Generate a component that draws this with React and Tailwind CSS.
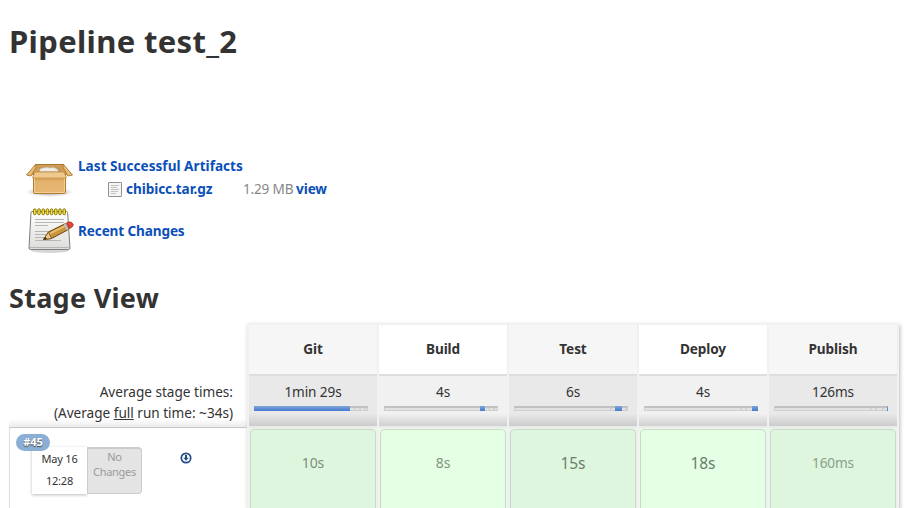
const stages = [
  { name: "Git", avg: "1min 29s", start: 0, width: 96, ticks: [99, 104, 109], time: "10s", tone: "text-[14px] text-[#7b8f7b]" },
  { name: "Build", avg: "4s", start: 96, width: 5, ticks: [103, 108], time: "8s", tone: "text-[14px] text-[#82937f]" },
  { name: "Test", avg: "6s", start: 101, width: 7, ticks: [95, 110], time: "15s", tone: "text-[15.5px] text-[#6d806d]" },
  { name: "Deploy", avg: "4s", start: 108, width: 6, ticks: [95, 100], time: "18s", tone: "text-[15.5px] text-[#6b7e6b]" },
  { name: "Publish", avg: "126ms", start: 113, width: 1, ticks: [95, 100, 107], time: "160ms", tone: "text-[13.6px] text-[#8a9f8a]" },
];

function BoxIcon() {
  return (
    <svg width="49" height="48" viewBox="0 0 49 48" className="shrink-0">
      <defs>
        <linearGradient id="boxFront" x1="0" y1="0" x2="0" y2="1">
          <stop offset="0" stopColor="#e2af68" />
          <stop offset="1" stopColor="#e6b873" />
        </linearGradient>
        <radialGradient id="boxShadow">
          <stop offset="0" stopColor="#000" stopOpacity=".4" />
          <stop offset="1" stopColor="#000" stopOpacity="0" />
        </radialGradient>
      </defs>
      <ellipse cx="24.500" cy="37" rx="24" ry="5" fill="url(#boxShadow)" />
      <path d="M10.500 9.500h28l3 10h-34z" fill="#cf9d58" stroke="#a9752d" />
      <path d="M14 12h22v6H13z" fill="#c3965a" />
      <path d="M15 16.500c-1-2.500 1-3.500 4-3.500 3-1 5.500 0 6 0 4-1 8 .5 8 3.500z" fill="#eeede9" stroke="#cfc6b6" strokeWidth=".6" />
      <path d="M8.500 19.500h32v18q0 1-1 1h-30q-1 0-1-1z" fill="url(#boxFront)" stroke="#b07a30" />
      <path d="M9.500 21h30v16.500h-30z" fill="none" stroke="#f2cf95" />
      <path d="M10 24.500h29" stroke="#c99550" strokeWidth="1.500" opacity=".5" />
      <path d="M10.500 9.500L1.500 20l4.500 1 5-8.500zM38.500 9.500l9 10.500-4.500 1-5-8.500z" fill="#e8bd7c" stroke="#b57f36" strokeLinejoin="round" />
      <path d="M10 17h29l2.500 6h-34z" fill="#eec88c" stroke="#c48c43" strokeWidth=".8" />
    </svg>
  );
}

function NotepadIcon() {
  return (
    <svg width="49" height="48" viewBox="0 0 49 48" className="shrink-0">
      <defs>
        <linearGradient id="paper" x1="0" y1="0" x2="0" y2="1">
          <stop offset="0" stopColor="#fff" />
          <stop offset="1" stopColor="#dcdcda" />
        </linearGradient>
      </defs>
      <ellipse cx="25" cy="44.500" rx="19" ry="2.500" fill="#000" opacity=".16" />
      <path d="M7 5.500h34.500q1 0 1.100 1l2.400 35.500q0 1.500-1.500 1.500h-38q-1.500 0-1.500-1.500L6 6.500q0-1 1-1z" fill="url(#paper)" stroke="#7d7d79" />
      <path d="M4.500 41.500h40" stroke="#b5b5b1" />
      <path d="M10 13.500h29M10 16.500h29M10 19.500h13M10 25.500h23M10 28.500h16M10 31.500h10M10 34.500h26" stroke="#b6b6b3" />
      <g fill="#f2dc32" stroke="#857206" strokeWidth=".9">
        {[9.500, 13.700, 17.900, 22.100, 26.300, 30.500, 34.700, 38.900].map((x) => (
          <rect key={x} x={x - 1} y="2.800" width="2.600" height="6" rx="1.300" />
        ))}
      </g>
      <path d="M18.500 33.500l5-7.500 17-8.500 3 6-17 9z" fill="#c9943c" stroke="#6b4310" strokeLinejoin="round" />
      <path d="M25 27.500l16-8" stroke="#e8c074" strokeWidth="1.600" />
      <path d="M18.500 33.500l5-7.500 3 6.500z" fill="#e9ca8c" stroke="#6b4310" strokeWidth=".7" />
      <path d="M18.500 33.500l2-2.700 1.200 2.200z" fill="#302819" />
      <path d="M39.700 17.800l3 6" stroke="#bdbdbd" strokeWidth="2.500" />
      <path d="M41.500 17l2-1q3.500-.6 4.500 2.200 .4 1.800-.8 2.600l-3 1.900z" fill="#e8453c" stroke="#9d2620" strokeWidth=".8" />
    </svg>
  );
}

function FileIcon() {
  return (
    <svg width="14" height="16" viewBox="0 0 14 16" className="shrink-0">
      <rect x=".5" y="1.500" width="13" height="14" rx=".5" fill="#f5f5f5" stroke="#929292" />
      <path d="M3 4.500h8M3 6.500h6M3 8.500h8M3 10.500h7M3 12.500h5" stroke="#c4c4c4" />
    </svg>
  );
}

function Stage({ stage, odd }) {
  return (
    <div className="flex w-[130px] shrink-0 flex-col border-l-2 border-[#f1f1f1]">
      <div className={`flex h-[49px] items-center justify-center text-[13.6px] font-bold tracking-[-0.1px] ${odd ? "bg-[#f6f6f6]" : "bg-white"}`}>{stage.name}</div>
      <div className={`h-[52px] border-t-2 border-[#dedede] bg-linear-to-b from-75% ${odd ? "from-[#e9e9e9] to-[#cbcbcb]" : "from-[#f1f1f1] to-[#d0d0d0]"}`}>
        <div className="mt-[6px] text-center text-[13.6px] leading-5 tracking-[-0.1px]">{stage.avg}</div>
        <div className="relative mt-1 ml-[5px] h-[5px] w-[114px] border border-t-2 border-[#cfcfcf] border-t-[#c1c1c1] bg-[#e2e2e2]">
          {stage.ticks.map((x) => (
            <i key={x} className="absolute top-0 h-0.5 w-0.5 bg-[#d3d3d3]" style={{ left: x }} />
          ))}
          <i className="absolute -top-0.5 h-[5px] bg-linear-to-b from-[#7fa5d3] to-[#4579d5]" style={{ left: stage.start - 1, width: stage.width }} />
        </div>
      </div>
      <div className={`flex flex-1 flex-col border-t-2 border-[#eaeaea] px-px pt-px ${odd ? "bg-[#e6f5e6]" : "bg-[#eafaea]"}`}>
        <div className={`flex-1 rounded-t-[5px] border border-b-0 border-[#cbd7cb] pt-[23px] text-center leading-5 tracking-[-0.1px] ${stage.tone} ${odd ? "bg-[#ddf6dd]" : "bg-[#e4ffe4]"}`}>{stage.time}</div>
      </div>
    </div>
  );
}

export default function App() {
  return (
    <main className="flex h-[508px] w-[910px] flex-col overflow-hidden bg-white font-['Noto_Sans',sans-serif] text-[#333]">
      <h1 className="ml-[9px] h-[155px] pt-[21px] text-[31px] leading-10 font-bold tracking-[0.34px] whitespace-nowrap">Pipeline test_2</h1>
      <section className="ml-[25px] flex h-[49px] text-[13.6px] leading-5 font-bold text-[#0b4fb8]">
        <BoxIcon />
        <div className="ml-1">
          <div className="mt-px tracking-[0.02px] whitespace-nowrap">Last Successful Artifacts</div>
          <div className="mt-[3px] ml-[30px] flex items-center whitespace-nowrap">
            <FileIcon />
            <span className="ml-1 w-[117px] tracking-[-0.08px]">chibicc.tar.gz</span>
            <span className="w-[53px] font-normal tracking-[-0.2px] text-[#888]">1.29 MB</span>
            <span className="tracking-[-0.1px]">view</span>
          </div>
        </div>
      </section>
      <section className="ml-[25px] flex h-[74px] pt-0.5 text-[13.6px] leading-5 font-bold text-[#0b4fb8]">
        <NotepadIcon />
        <div className="mt-[15px] ml-1 tracking-[-0.14px] whitespace-nowrap">Recent Changes</div>
      </section>
      <h2 className="ml-[9px] h-[45px] text-[27px] leading-10 font-bold tracking-[0.28px] whitespace-nowrap">Stage View</h2>
      <section className="ml-[9px] flex h-[185px]">
        <div className="flex w-[238px] flex-col">
          <div className="h-[104px] bg-linear-to-b from-white from-92% to-[#ececec] pt-[58px] pr-[14px] text-right text-[13.6px] leading-[21px]">
            <div>Average stage times:</div>
            <div className="tracking-[-0.01px]">(Average <u>full</u> run time: ~34s)</div>
          </div>
          <div className="relative flex-1 border-t border-l border-t-[#c7c7c7] border-l-[#ddd]">
            <span className="absolute top-1.5 left-1.5 z-10 flex h-[17px] w-[34px] items-center justify-center rounded-full bg-[#8baed4] text-[11px] font-bold text-white [text-shadow:0_1px_1px_#444]">#45</span>
            <div className="mt-[19px] ml-[22px] flex h-[47px] w-[110px] text-center text-[11px]">
              <div className="w-[55px] bg-white pt-px leading-[22px] tracking-[-0.2px] shadow-[0_1px_3px_#bbb]">May 16<br />12:28</div>
              <div className="w-[55px] rounded-r-[4px] border border-t-2 border-[#ccc] bg-[#e4e4e4] leading-[15px] tracking-[-0.3px] text-[#9b9b9b]">No<br />Changes</div>
            </div>
            <svg className="absolute top-[24px] left-[170px]" width="12" height="12" viewBox="0 0 12 12" fill="none">
              <circle cx="6" cy="6" r="4.700" stroke="#204a87" strokeWidth="1.700" />
              <path d="M6 3v3" stroke="#204a87" strokeWidth="2" />
              <path d="M3.300 5.700h5.400L6 8.700z" fill="#204a87" />
            </svg>
          </div>
        </div>
        <div className="flex w-[652px] border-t-2 border-r-2 border-[#f1f1f1] shadow-[1px_2px_4px_#bbb]">
          {stages.map((stage, i) => <Stage key={stage.name} stage={stage} odd={i % 2 === 0} />)}
        </div>
      </section>
    </main>
  );
}
